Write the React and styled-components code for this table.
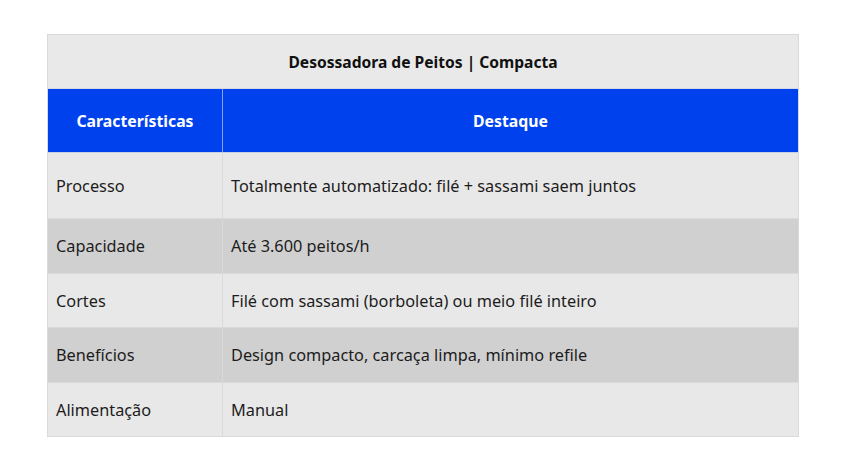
import React from "react";
import styled, { createGlobalStyle } from "styled-components";

const Global = createGlobalStyle`
  html, body { margin: 0; padding: 0; background: #ffffff; }
  body { font-family: "Noto Sans", "Open Sans", sans-serif; }
`;

const Page = styled.div`
  padding: 34px 48px 0 47px;
`;

const Table = styled.div`
  width: 752px;
  box-sizing: border-box;
  border: 1px solid #d9d9d9;
  display: flex;
  flex-direction: column;
`;

const TitleRow = styled.div`
  height: 53px;
  background: #e9e9e9;
  display: flex;
  align-items: center;
  justify-content: center;
  font-weight: 700;
  font-size: 15.6px;
  color: #111;
  border-bottom: 1px solid #d4d8e4;
`;

const Row = styled.div`
  display: grid;
  grid-template-columns: 174px 1fr;
  height: ${(p) => p.$h}px;
  background: ${(p) => p.$bg};
  border-top: ${(p) => (p.$first ? "none" : `1px solid ${p.$line || "#dadada"}`)};
`;

const Cell = styled.div`
  display: flex;
  align-items: center;
  justify-content: ${(p) => (p.$center ? "center" : "flex-start")};
  padding: 0 8px;
  font-size: ${(p) => (p.$bold ? "15.8px" : "16.3px")};
  font-weight: ${(p) => (p.$bold ? 700 : 400)};
  color: ${(p) => p.$color || "#1c1c1c"};
  border-left: ${(p) => (p.$divider ? `1px solid ${p.$divColor || "#dadada"}` : "none")};
`;

const rows = [
  ["Processo", "Totalmente automatizado: filé + sassami saem juntos", 65, "#e8e8e8", "#c9d0e6"],
  ["Capacidade", "Até 3.600 peitos/h", 54, "#d0d0d0"],
  ["Cortes", "Filé com sassami (borboleta) ou meio filé inteiro", 53, "#e8e8e8"],
  ["Benefícios", "Design compacto, carcaça limpa, mínimo refile", 54, "#d0d0d0"],
  ["Alimentação", "Manual", 53, "#e8e8e8"],
];

export default function App() {
  return (
    <>
      <Global />
      <Page>
        <Table>
          <TitleRow>Desossadora de Peitos | Compacta</TitleRow>
          <Row $h={63} $bg="#0041ee" $first>
            <Cell $center $bold $color="#ffffff">Características</Cell>
            <Cell $center $bold $color="#ffffff" $divider $divColor="#8aa0ee">Destaque</Cell>
          </Row>
          {rows.map(([k, v, h, bg, line]) => (
            <Row key={k} $h={h} $bg={bg} $line={line}>
              <Cell>{k}</Cell>
              <Cell $divider>{v}</Cell>
            </Row>
          ))}
        </Table>
      </Page>
    </>
  );
}
